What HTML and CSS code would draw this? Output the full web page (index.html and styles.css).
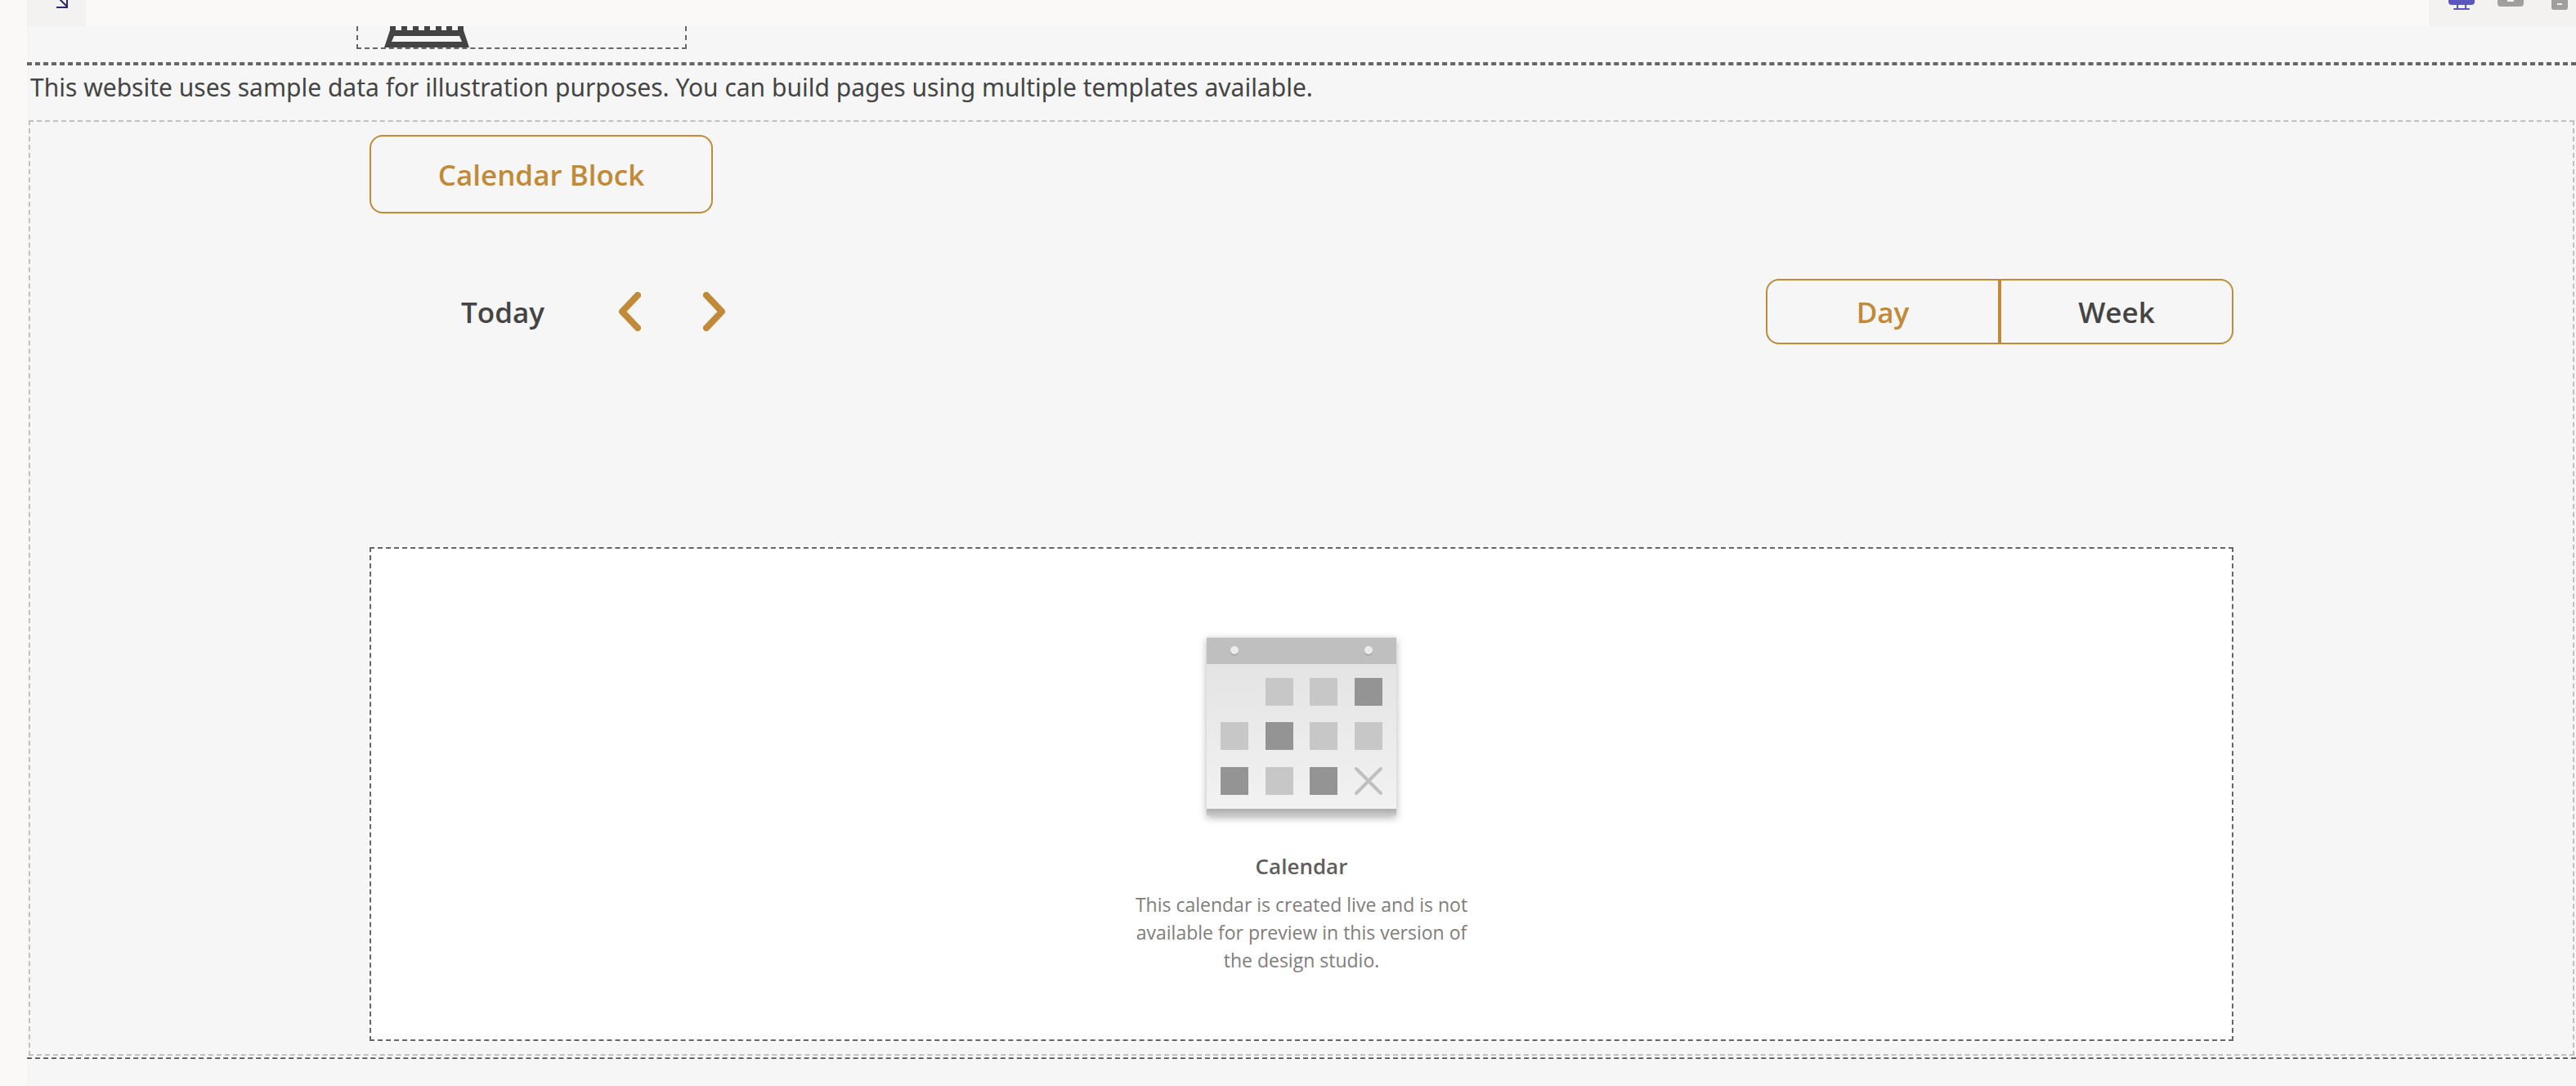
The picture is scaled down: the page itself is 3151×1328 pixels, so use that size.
FILE: index.html
```
<!DOCTYPE html>
<html lang="en">
<head>
<meta charset="utf-8">
<meta name="viewport" content="width=device-width, initial-scale=1">
<title>Design studio</title>
<link rel="stylesheet" href="styles.css">
</head>
<body>
<header class="topbar">
  <button class="topbar-expand" type="button" aria-label="Expand">
    <svg width="72" height="32" viewBox="0 0 72 32" fill="none" stroke="#2b2667" stroke-width="2" aria-hidden="true">
      <path d="M36-5 49 8M49-5V9M36 9H50"/>
    </svg>
  </button>
  <div class="devices">
    <button type="button" aria-label="Desktop">
      <svg width="32" height="32" viewBox="0 0 32 32" fill="#5c55c2" aria-hidden="true">
        <path d="M0-10H32V2a4 4 0 0 1-4 4H4a4 4 0 0 1-4-4ZM10 6h2v4h-2ZM20 6h2v4h-2Z"/>
        <rect x="6" y="10" width="20" height="2" rx="1"/>
      </svg>
    </button>
    <button type="button" aria-label="Tablet">
      <svg width="32" height="32" viewBox="0 0 32 32" aria-hidden="true">
        <rect y="-12" width="32" height="20" rx="4" fill="#a19f9d"/>
        <rect x="12" width="8" height="2" fill="#f3f2f1"/>
      </svg>
    </button>
    <button type="button" aria-label="Phone">
      <svg width="32" height="32" viewBox="0 0 32 32" aria-hidden="true">
        <rect x="6" y="-20" width="20" height="32" rx="3" fill="#a19f9d"/>
        <rect x="13" y="4" width="6" height="2" fill="#f3f2f1"/>
      </svg>
    </button>
  </div>
</header>

<main class="canvas">
  <div class="site-header">
    <div class="site-header-inner">
      <div class="logo-slot">
        <svg width="104" height="26" viewBox="0 0 104 26" fill="#444" aria-hidden="true">
          <path d="M7 0h7v6H7ZM21 0h7v6h-7ZM35 0h7v6h-7ZM49 0h7v6h-7ZM63 0h7v6h-7ZM76 0h7v6h-7ZM90 0h7v6h-7Z"/>
          <path fill-rule="evenodd" d="M7 5H97L104 26H0ZM12 12 9 19H95L92 12Z"/>
        </svg>
      </div>
    </div>
  </div>

  <p class="notice">This website uses sample data for illustration purposes. You can build pages using multiple templates available.</p>

  <section class="block">
    <div class="container">
      <button class="block-title" type="button">Calendar Block</button>

      <div class="toolbar">
        <div class="nav">
          <button class="today" type="button">Today</button>
          <button class="step" type="button" aria-label="Previous">
            <svg width="28" height="48" viewBox="0 0 28 48" aria-hidden="true"><path d="M24 4 5 24 24 44"/></svg>
          </button>
          <button class="step" type="button" aria-label="Next">
            <svg width="28" height="48" viewBox="0 0 28 48" aria-hidden="true"><path d="M4 4 23 24 4 44"/></svg>
          </button>
        </div>
        <div class="views">
          <button class="view view-active" type="button">Day</button>
          <button class="view" type="button">Week</button>
        </div>
      </div>

      <div class="calendar-frame">
        <div class="calendar">
          <svg class="calendar-art" width="232" height="219" viewBox="0 0 232 219" aria-hidden="true">
            <defs>
              <linearGradient id="page" x1="0" y1="0" x2="0" y2="1">
                <stop offset="0" stop-color="#e1e1e1"/><stop offset="1" stop-color="#f2f2f2"/>
              </linearGradient>
              <linearGradient id="edge" x1="0" y1="0" x2="0" y2="1">
                <stop offset="0" stop-color="#a6a6a6"/><stop offset="1" stop-color="#cacaca"/>
              </linearGradient>
            </defs>
            <rect y="209" width="232" height="10" fill="url(#edge)"/>
            <rect y="1" width="232" height="210" fill="url(#page)"/>
            <rect y="2" width="232" height="32" fill="#bfbfbf"/>
            <g fill="#a8a8a8"><circle cx="34" cy="19" r="5"/><circle cx="198" cy="19" r="5"/></g>
            <g fill="#ebebeb"><circle cx="34" cy="17" r="5"/><circle cx="198" cy="17" r="5"/></g>
            <g fill="#c7c7c7">
              <path d="M72 51h34v34H72ZM126 51h34v34h-34ZM17 105h34v34H17ZM126 105h34v34h-34ZM181 105h34v34h-34ZM72 160h34v34H72Z"/>
            </g>
            <g fill="#949494">
              <path d="M181 51h34v34h-34ZM72 105h34v34H72ZM17 160h34v34H17ZM126 160h34v34h-34Z"/>
            </g>
            <path d="M183 162 213 192M213 162 183 192" fill="none" stroke="#bfbfbf" stroke-width="4" stroke-linecap="round"/>
          </svg>
          <h2 class="calendar-title">Calendar</h2>
          <p class="calendar-text">This calendar is created live and is not available for preview in this version of the design studio.</p>
        </div>
      </div>
    </div>
  </section>
  <div class="section-end"></div>
</main>
</body>
</html>
```
FILE: styles.css
```
* { box-sizing: border-box; }

body {
  margin: 0;
  min-height: 100vh;
  display: flex;
  flex-direction: column;
  background: #faf9f8;
  color: #444;
  font-family: "Open Sans", "Noto Sans", sans-serif;
}

button {
  padding: 0;
  border: 0;
  background: none;
  color: inherit;
  font: inherit;
  cursor: pointer;
}

svg { display: block; }

.topbar {
  display: flex;
  justify-content: space-between;
  height: 32px;
  margin-left: 33px;
}

.topbar-expand { background: #f3f2f1; }

.devices {
  display: flex;
  gap: 28px;
  padding: 0 4px 0 24px;
  background: #f3f2f1;
}

.canvas {
  flex: 1;
  margin-left: 33px;
  background: #f6f6f6;
}

.site-header {
  padding-bottom: 16px;
  border-bottom: 2px dashed #666;
}

.site-header-inner {
  max-width: 2312px;
  margin: 0 auto;
}

.logo-slot {
  width: 404px;
  padding-left: 32px;
  border: 2px dashed #666;
  border-top: 0;
}

.notice {
  margin: 0;
  padding: 5px 2px 18px 4px;
  border-top: 2px dashed #666;
  font: 400 30px/44px "Noto Sans", sans-serif;
}

.block {
  margin: 0 2px;
  padding: 16px 0 14px;
  border: 2px dashed #c1c1c1;
}

.container {
  max-width: 2280px;
  margin: 0 auto;
}

.block-title {
  width: 420px;
  height: 96px;
  border: 2px solid #c08a38;
  border-radius: 16px;
  color: #c08a38;
  font-size: 35px;
  font-weight: 600;
}

.toolbar {
  display: flex;
  justify-content: space-between;
  margin: 80px 0 246px;
  font-size: 35px;
  font-weight: 600;
}

.nav {
  display: flex;
  padding-left: 112px;
}

.today { margin-right: 52px; }

.step {
  display: flex;
  align-items: center;
  justify-content: center;
  width: 104px;
}

.step path {
  fill: none;
  stroke: #c08a38;
  stroke-width: 8px;
  stroke-linecap: round;
  stroke-linejoin: round;
}

.views { display: flex; }

.view {
  width: 286px;
  height: 80px;
  border: 2px solid #c08a38;
}

.view:first-child { border-radius: 16px 0 0 16px; }
.view:last-child { border-radius: 0 16px 16px 0; }
.view-active { color: #c08a38; }

.calendar-frame {
  margin: 0 -2px;
  border: 2px dashed #fff;
}

.calendar {
  display: flex;
  flex-direction: column;
  align-items: center;
  padding: 107px 24px 80px;
  border: 2px dashed #666;
  background: #fff;
  text-align: center;
}

.calendar-art { filter: drop-shadow(0 3px 5px rgba(0, 0, 0, 0.3)); }

.calendar-title {
  margin: 44px 0 12px;
  color: #605e5c;
  font-size: 26px;
  font-weight: 600;
  line-height: 36px;
}

.calendar-text {
  max-width: 420px;
  margin: 0;
  color: #7f7d7b;
  font-size: 23px;
  line-height: 34px;
}

.section-end {
  margin-top: 2px;
  border-top: 2px dashed #666;
}
```
